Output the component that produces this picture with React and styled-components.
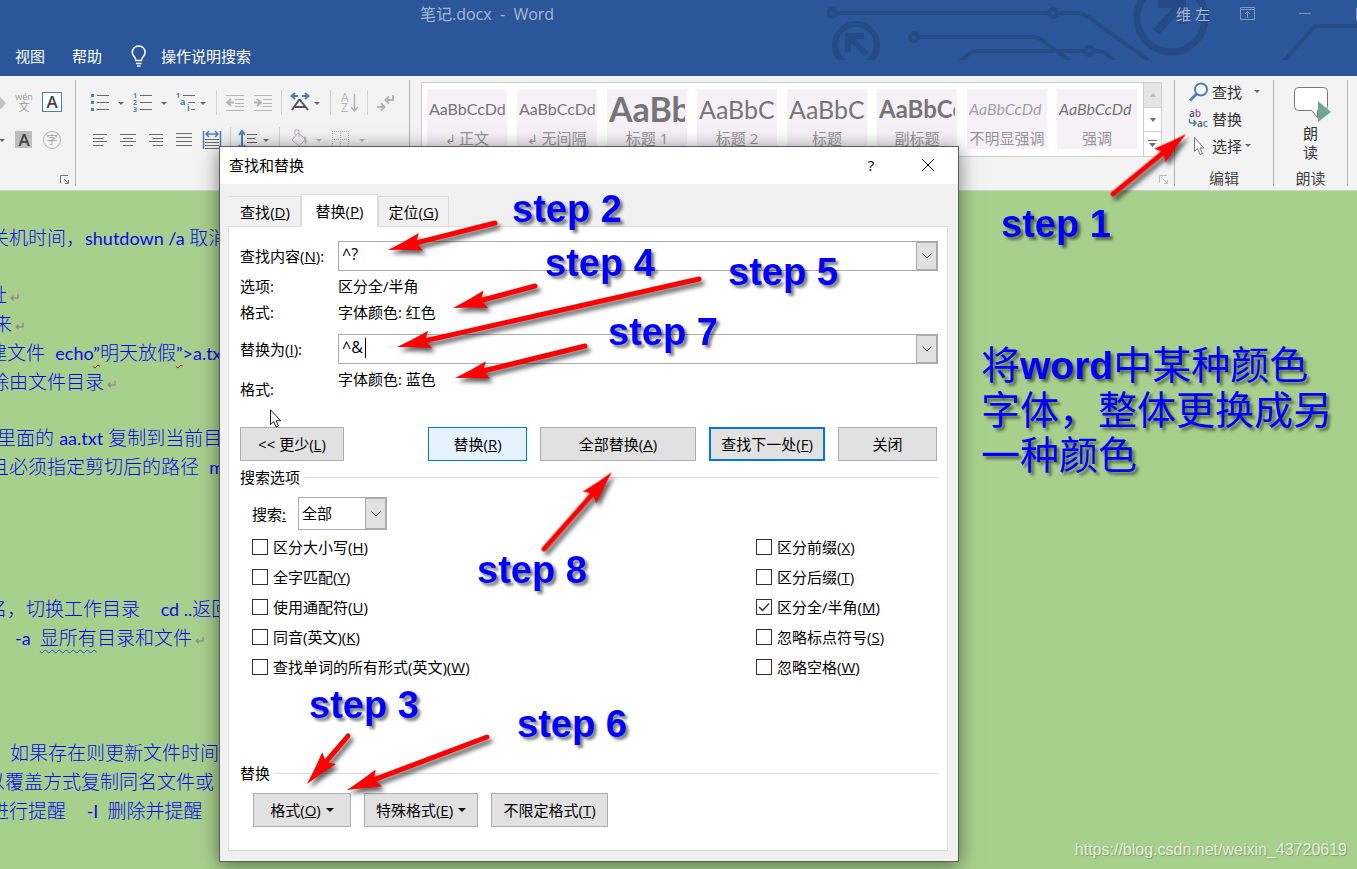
import React, { Component } from 'react';
import styled, { createGlobalStyle, css } from 'styled-components';

const uiFont = '"Open Sans", "Noto Sans CJK SC", sans-serif';
const docFont = 'Lato, "Noto Sans CJK SC", sans-serif';
const blue = '#4a80ba';
const gray = '#6a6a6a';
const faded = '#b5b3b5';

const GlobalStyle = createGlobalStyle`
    * {
        box-sizing: border-box;
    }

    body {
        margin: 0;
        font-family: ${uiFont};
        font-size: 15px;
        line-height: 20px;
        color: #000;
    }

    button, input, select {
        font: inherit;
        color: inherit;
        margin: 0;
        padding: 0;
        border: 0;
        background: none;
        border-radius: 0;
    }

    svg {
        display: block;
        flex: none;
    }
`;

const Page = styled.div`
    position: relative;
    display: flex;
    flex-direction: column;
    min-height: 100vh;
    overflow: hidden;
    background: #a8d08d;
`;

/* ---------- title bar ---------- */

const Header = styled.header`
    position: relative;
    background: #2b579a;
    color: #fff;
`;

const Circuit = styled.svg`
    position: absolute;
    top: 0;
    right: 0;
`;

const TitleBar = styled.div`
    position: relative;
    display: flex;
    align-items: center;
    height: 27px;
    padding-left: 420px;
    color: #a6b8d6;
`;

const DocTitle = styled.span`
    flex: 1;
    font-size: 16px;
    white-space: pre;
`;

const UserName = styled.span`
    margin-right: 18px;
`;

const WindowButton = styled.button`
    display: flex;
    justify-content: center;
    width: ${props => props.$wide ? 76 : 39}px;
`;

const MenuBar = styled.nav`
    position: relative;
    display: flex;
    align-items: center;
    gap: 27px;
    height: 49px;
    padding: 8px 15px 0;
`;

const MenuButton = styled.button`
    display: flex;
    align-items: center;
    gap: 13px;
`;

/* ---------- ribbon ---------- */

const Ribbon = styled.section`
    display: flex;
    height: 115px;
    padding-top: 4px;
    background: #f3f3f3;
    border-bottom: 1px solid #d2d2d2;
`;

const Group = styled.div`
    position: relative;
    display: flex;
    flex-direction: column;
    width: ${props => props.$width}px;
    height: 106px;
    border-right: 1px solid #b4b4b4;

    ${props => props.$grow && css`
        flex: 1;
        width: auto;
    `}

    &:last-child {
        border-right: 0;
    }
`;

const ToolRow = styled.div`
    display: flex;
    align-items: center;
    height: 24px;
    margin-top: ${props => props.$first ? 10 : 13}px;
    padding-left: ${props => props.$pad || 0}px;
`;

const Tool = styled.button`
    flex: none;
    width: ${props => props.$width}px;
    height: 24px;
`;

const Separator = styled.span`
    width: 1px;
    height: 25px;
    background: #d0d0d0;
`;

const GroupLabel = styled.span`
    margin-top: auto;
    line-height: 16px;
    text-align: center;
    color: #444;
`;

const Launcher = styled.button`
    position: absolute;
    right: 5px;
    bottom: 1px;
`;

const Gallery = styled.div`
    display: flex;
    margin: 2px 12px 0 11px;
    height: 75px;
    background: #fff;
    border: 1px solid #cfcfcf;
`;

const Tiles = styled.div`
    flex: 1;
    display: flex;
    gap: 10px;
    padding: 6px 5px;
    overflow: hidden;
`;

const Tile = styled.button`
    flex: none;
    display: flex;
    flex-direction: column;
    width: 80px;
    height: 60px;
    padding: 0 2px;
    background: #f6f1f7;
    overflow: hidden;
    color: #979597;
`;

const Sample = styled.span`
    width: 76px;
    height: 40px;
    line-height: 40px;
    overflow: hidden;
    text-align: left;
    white-space: nowrap;
    font-family: ${docFont};
    font-size: ${props => props.$size}px;
    font-weight: ${props => props.$bold ? 700 : 400};
    font-style: ${props => props.$italic ? 'italic' : 'normal'};
    color: ${props => props.$pale ? '#a3a1a3' : '#777577'};
`;

const TileName = styled.span`
    width: 76px;
    line-height: 18px;
    white-space: nowrap;
    text-align: center;
`;

const GalleryScroll = styled.div`
    display: flex;
    flex-direction: column;
    width: 18px;
    border-left: 1px solid #cfcfcf;
`;

const ScrollButton = styled.button`
    display: flex;
    align-items: center;
    justify-content: center;
    flex: 1;
    background: ${props => props.$off ? '#e5e5e5' : '#fff'};

    & + & {
        border-top: 1px solid #cfcfcf;
    }
`;

const EditList = styled.div`
    display: flex;
    flex-direction: column;
    margin-top: -2px;
    padding-left: 13px;
`;

const EditButton = styled.button`
    display: flex;
    align-items: center;
    gap: 3px;
    height: 27px;
    color: #333;
`;

const SpeechButton = styled.button`
    display: flex;
    flex-direction: column;
    align-items: center;
    padding-top: 6px;
    line-height: 19px;
    color: #333;
`;

/* ---------- document ---------- */

const Document = styled.main`
    width: 100%;
    height: 678px;
    overflow: hidden;
    font-family: ${docFont};
    font-size: 19px;
    font-weight: 300;
    line-height: 29px;
    color: #0a0ae6;
`;

const Lines = styled.div`
    margin-top: ${props => props.$space}px;
`;

const Line = styled.p`
    height: 29px;
    margin: 0 0 0 ${props => props.$start}px;
    white-space: pre;
`;

const Latin = styled.span`
    font-size: 18px;
    font-weight: 400;
`;

const ReturnMark = styled.span`
    margin-left: 3px;
    font-family: "DejaVu Sans", sans-serif;
    font-size: 13px;
    line-height: 13px;
    color: #858585;
`;

const Wavy = styled.span`
    text-decoration: underline wavy ${props => props.$color} 1px;
    text-underline-offset: 4px;
`;

/* ---------- dialog ---------- */

const Dialog = styled.section`
    position: absolute;
    top: 146px;
    left: 219px;
    width: 740px;
    background: #f0f0f0;
    border: 1px solid #5c5c5c;
    box-shadow: 0 3px 18px rgba(0, 0, 0, 0.5);
`;

const DialogTitle = styled.div`
    display: flex;
    align-items: center;
    height: 37px;
    padding: 0 22px 2px 9px;
    background: #fff;
`;

const DialogName = styled.span`
    flex: 1;
`;

const TitleButton = styled.button`
    display: flex;
    justify-content: center;
    width: 16px;
    margin-left: 41px;
`;

const TabList = styled.div`
    display: flex;
    align-items: flex-end;
    height: 42px;
    padding-left: 10px;
`;

const Tab = styled.button`
    height: ${props => props.$active ? 33 : 30}px;
    width: ${props => props.$active ? 77 : 71}px;
    border: 1px solid #dcdcdc;
    border-bottom: 0;

    &:first-child {
        border-left: 0;
    }

    ${props => props.$active && css`
        position: relative;
        margin-bottom: -1px;
        background: #fff;
    `}
`;

const Panel = styled.div`
    margin: 0 10px 10px 8px;
    padding: 14px 9px 23px 11px;
    background: #fff;
    border: 1px solid #dcdcdc;
`;

const Field = styled.div`
    display: flex;
    align-items: center;
    height: 30px;
`;

const FieldLabel = styled.label`
    width: 98px;
`;

const Combo = styled.div`
    position: relative;
    flex: 1;
    display: flex;
    height: 30px;
    border: 1px solid #ababab;
`;

const ComboInput = styled.input`
    flex: 1;
    padding: 0 3px 4px;
    font-size: 16px;
    outline: 0;
`;

const Caret = styled.span`
    position: absolute;
    top: 3px;
    left: 26px;
    width: 1px;
    height: 20px;
    background: #000;
`;

const DropButton = styled.button`
    display: flex;
    align-items: center;
    justify-content: center;
    width: 21px;
    background: #e1e1e1;
    border: 1px solid #ababab;
`;

const Info = styled.dl`
    display: grid;
    grid-template-columns: 98px 1fr;
    line-height: 26px;
    margin: ${props => props.$tall ? '2px 0 35px' : '2px 0 9px'};
`;

const InfoName = styled.dt`
    padding-top: ${props => props.$low ? 10 : 0}px;
    line-height: 26px;
    height: 26px;
`;

const InfoValue = styled.dd`
    margin: 0;
`;

const Actions = styled.div`
    display: flex;
    gap: 13px;
    padding-right: 1px;
`;

const Button = styled.button`
    display: flex;
    align-items: center;
    justify-content: center;
    gap: 5px;
    width: ${props => props.$width}px;
    height: 34px;
    background: #e1e1e1;
    border: 1px solid #adadad;

    ${props => props.$less && css`
        margin-right: auto;
    `}

    ${props => props.$hot && css`
        background: #e5f1fb;
        border-color: #0078d7;
    `}

    ${props => props.$primary && css`
        border: 2px solid #0078d7;
    `}
`;

const SectionTitle = styled.h2`
    display: flex;
    align-items: center;
    gap: 5px;
    margin: ${props => props.$space}px 0 0;
    font-size: 15px;
    font-weight: 400;

    &::after {
        content: '';
        flex: 1;
        height: 1px;
        background: #dcdcdc;
    }
`;

const SearchRow = styled.div`
    display: flex;
    align-items: center;
    margin-top: 10px;
    padding-left: 12px;
`;

const SearchLabel = styled.label`
    width: 46px;
`;

const SelectBox = styled.div`
    position: relative;
    width: 89px;
    height: 33px;
    border: 1px solid #ababab;
`;

const Select = styled.select`
    appearance: none;
    width: 100%;
    height: 31px;
    padding: 0 3px 2px;
    background: #fff;
`;

const SelectArrow = styled.span`
    position: absolute;
    top: 0;
    right: 0;
    display: flex;
    align-items: center;
    justify-content: center;
    width: 21px;
    height: 31px;
    background: #e1e1e1;
    border: 1px solid #ababab;
    pointer-events: none;
`;

const Checks = styled.div`
    display: grid;
    grid-template-columns: 504px 1fr;
    grid-template-rows: repeat(5, 30px);
    grid-auto-flow: column;
    margin-top: 2px;
    padding-left: 12px;
`;

const CheckLabel = styled.label`
    display: flex;
    align-items: center;
    gap: 5px;
`;

const CheckBox = styled.input`
    appearance: none;
    width: 16px;
    height: 16px;
    border: 1px solid #333;
    background: #fff;

    &:checked {
        background: #fff url("data:image/svg+xml,%3Csvg xmlns='http://www.w3.org/2000/svg' viewBox='0 0 14 14'%3E%3Cpath d='M2 7l3.5 3.5L12 3.5' fill='none' stroke='%23333' stroke-width='1.5'/%3E%3C/svg%3E");
    }
`;

const FormatActions = styled(Actions)`
    margin-top: 10px;
    padding-left: 13px;
`;

/* ---------- notes drawn over the window ---------- */

const Notes = styled.div`
    position: absolute;
    inset: 0;
    pointer-events: none;
    color: #0000fe;
    font-family: "Liberation Sans", "Noto Sans CJK SC", sans-serif;
    text-shadow: 3px 3px 3px rgba(0, 0, 0, 0.5);

    b {
        font-weight: 700;
    }
`;

const Arrows = styled.svg`
    position: absolute;
    top: 0;
    left: 0;
    overflow: visible;
    filter: drop-shadow(3px 4px 2px rgba(0, 0, 0, 0.6));
`;

const Step = styled.span`
    position: absolute;
    top: ${props => props.$y}px;
    left: ${props => props.$x}px;
    font-size: 38px;
    line-height: 44px;
    font-weight: 700;
    white-space: nowrap;
`;

const Summary = styled.p`
    position: absolute;
    top: 343px;
    left: 981px;
    margin: 0;
    font-size: 39px;
    line-height: 45px;
    font-weight: 400;
    white-space: nowrap;
`;

const Pointer = styled.svg`
    position: absolute;
    top: 409px;
    left: 270px;
`;

const Watermark = styled.a`
    position: absolute;
    right: 10px;
    bottom: 9px;
    font-family: "Liberation Sans", sans-serif;
    font-size: 16px;
    text-decoration: none;
    color: #e3efdb;
    text-shadow: 1px 1px 1px rgba(90, 110, 80, 0.5);
`;

const arrows = [
    [1113, 194, 1186, 134],
    [495, 223, 388, 250],
    [535, 286, 453, 308],
    [699, 279, 397, 347],
    [585, 346, 455, 378],
    [544, 549, 612, 472],
    [348, 736, 307, 784],
    [487, 737, 347, 790],
];

const steps = [
    [1, 1001, 202],
    [2, 512, 187],
    [3, 309, 683],
    [4, 545, 241],
    [5, 728, 250],
    [6, 517, 702],
    [7, 608, 310],
    [8, 477, 548],
];

const styles = [
    {sample: 'AaBbCcDd', name: '正文', size: 16, mark: true},
    {sample: 'AaBbCcDd', name: '无间隔', size: 16, mark: true},
    {sample: 'AaBb', name: '标题 1', size: 34, bold: true},
    {sample: 'AaBbC', name: '标题 2', size: 25},
    {sample: 'AaBbC', name: '标题', size: 25},
    {sample: 'AaBbCc', name: '副标题', size: 24, bold: true},
    {sample: 'AaBbCcDd', name: '不明显强调', size: 16, italic: true, pale: true},
    {sample: 'AaBbCcDd', name: '强调', size: 16, italic: true},
];

const checks = [
    ['区分大小写', 'H'],
    ['全字匹配', 'Y'],
    ['使用通配符', 'U'],
    ['同音(英文)', 'K'],
    ['查找单词的所有形式(英文)', 'W'],
    ['区分前缀', 'X'],
    ['区分后缀', 'T'],
    ['区分全/半角', 'M', true],
    ['忽略标点符号', 'S'],
    ['忽略空格', 'W'],
];

// caption with its access key, "替换(P)"
const Key = ({text, k}) => <span>{text}(<u>{k}</u>)</span>;

const Down = ({x, y = 12, color = gray}) => <path d={`M${x} ${y - 1}h6l-3 3z`} fill={color}/>;

const Icon = ({width, children}) => <svg width={width} height="24" fill="none">{children}</svg>;

const Chevron = () => <svg width="12" height="8" fill="none" stroke="#444">
    <path d="M1.500 1.500L6 6l4.500-4.500"/>
</svg>;

const Triangle = () => <svg width="8" height="5"><path d="M0 0h8L4 4z" fill="#000"/></svg>;

const LauncherIcon = ({color}) => <svg width="10" height="10" fill="none" stroke={color}>
    <path d="M.5 8V.5H8M4 4l4 4M8.500 5v3.500H5"/>
</svg>;

const AlignTool = ({label, d}) => <Tool $width={28} aria-label={label}>
    <Icon width={28}><path d={d} stroke={gray}/></Icon>
</Tool>;

const Arrow = ({from, to}) => {
    const dx = to[0] - from[0];
    const dy = to[1] - from[1];
    const length = Math.hypot(dx, dy);
    const angle = Math.atan2(dy, dx) * 180 / Math.PI;

    return <g transform={`translate(${from[0]} ${from[1]}) rotate(${angle})`}>
        <path d={`M0 0H${length - 27}`} stroke="#fe0000" strokeWidth="5" strokeLinecap="round"/>
        <path
            d={`M${length} 0Q${length - 18} -4 ${length - 34} -9L${length - 29} 0L${length - 34} 9Q${length - 18} 4 ${length} 0z`}
            fill="#fe0000"
        />
    </g>
};

const AppHeader = () => <Header>
    <Circuit width="530" height="60" viewBox="827 0 530 60" fill="none" stroke="#244b86" strokeWidth="4">
        <circle cx="832" cy="13" r="4"/>
        <path d="M836 13h212M1057 13h20q6 0 11 4l60 43"/>
        <circle cx="1053" cy="13" r="4"/>
        <circle cx="914" cy="37" r="4"/>
        <path d="M918 37h115q5 0 9 3l28 21M960 61l10-8q3-2 7-2h107M1093 51h5q4 0 8 3l9 7"/>
        <circle cx="1089" cy="51" r="4"/>
        <path d="M1284 61l27-31q3-4 8-4h40"/>
        <circle cx="856" cy="45" r="21" strokeWidth="6"/>
        <path d="M864 36h-16v16M848 36l18 18" strokeWidth="6"/>
        <circle cx="1171" cy="18" r="34" strokeWidth="7"/>
        <path d="M1158 4h24v20M1182 4l-26 28" strokeWidth="8"/>
    </Circuit>
    <TitleBar>
        <DocTitle>笔记.docx  -  Word</DocTitle>
        <UserName>维 左</UserName>
        <WindowButton aria-label="功能区显示选项">
            <svg width="15" height="13" fill="none" stroke="#7c97c4">
                <path d="M.5.5h14v12H.5zM.5 2.500h14M7.500 11V5M5 7l2.500-2.500L10 7"/>
            </svg>
        </WindowButton>
        <WindowButton $wide aria-label="最小化">
            <svg width="12" height="13" stroke="#7c97c4"><path d="M0 6.500h12"/></svg>
        </WindowButton>
        <svg width="14" height="13" fill="none" stroke="#7c97c4"><path d="M13.500.5v12"/></svg>
    </TitleBar>
    <MenuBar>
        <MenuButton>视图</MenuButton>
        <MenuButton>帮助</MenuButton>
        <MenuButton>
            <svg width="19" height="22" fill="none" stroke="#fff" strokeWidth="1.500">
                <path d="M7 15.500C7 12 3.300 11.500 3.300 7.300a6.400 6.400 0 0 1 12.800 0c0 4.200-3.700 4.700-3.700 8.200zM7 18.500h5.500M8 21h3.500"/>
            </svg>
            操作说明搜索
        </MenuButton>
    </MenuBar>
</Header>;

const FontGroup = () => <Group $width={76}>
    <ToolRow $first>
        <Tool $width={10} aria-label="清除格式">
            <Icon width={10}><path d="M0 7l6 6-5 6H0z" fill="#c3c0c5"/></Icon>
        </Tool>
        <Tool $width={26} aria-label="拼音指南">
            <Icon width={26}>
                <text x="14" y="10" fontSize="9" textAnchor="middle" fill="#9b999b">wén</text>
                <text x="14" y="21" fontSize="11" textAnchor="middle" fill="#9b999b">文</text>
            </Icon>
        </Tool>
        <Tool $width={32} aria-label="字符边框">
            <Icon width={32}>
                <rect x="6.500" y="2.500" width="19" height="19" fill="#fff" stroke={blue}/>
                <text x="16" y="18" fontSize="17" fontWeight="600" textAnchor="middle" fill="#444">A</text>
            </Icon>
        </Tool>
    </ToolRow>
    <ToolRow>
        <Tool $width={10} aria-label="字体颜色"><Icon width={10}><Down x={-1} y={13}/></Icon></Tool>
        <Tool $width={26} aria-label="字符底纹">
            <Icon width={26}>
                <rect x="5" y="4" width="17" height="17" fill="#bdbdbd"/>
                <text x="14" y="19" fontSize="17" fontWeight="600" textAnchor="middle" fill="#444">A</text>
            </Icon>
        </Tool>
        <Tool $width={32} aria-label="带圈字符">
            <Icon width={32}>
                <circle cx="16" cy="13" r="8.500" stroke={faded}/>
                <text x="16" y="17" fontSize="11" textAnchor="middle" fill="#a3a1a3">字</text>
            </Icon>
        </Tool>
    </ToolRow>
    <Launcher aria-label="字体设置"><LauncherIcon color="#777"/></Launcher>
</Group>;

const ParagraphGroup = () => <Group $width={334}>
    <ToolRow $first $pad={10}>
        <Tool $width={45} aria-label="项目符号">
            <Icon width={45}>
                <path d="M5 4h3v3H5zM5 11h3v3H5zM5 18h3v3H5z" fill={blue}/>
                <path d="M11 5.500h12M11 12.500h12M11 19.500h12" stroke={gray}/>
                <Down x={32} y={13}/>
            </Icon>
        </Tool>
        <Tool $width={43} aria-label="编号">
            <Icon width={43}>
                <text x="2" y="8" fontSize="7" fontWeight="700" fill={blue}>1</text>
                <text x="2" y="15" fontSize="7" fontWeight="700" fill={blue}>2</text>
                <text x="2" y="22" fontSize="7" fontWeight="700" fill={blue}>3</text>
                <path d="M9 5.500h12M9 12.500h12M9 19.500h12" stroke={gray}/>
                <Down x={30} y={13}/>
            </Icon>
        </Tool>
        <Tool $width={42} aria-label="多级列表">
            <Icon width={42}>
                <text x="2" y="8" fontSize="7" fontWeight="700" fill={blue}>1</text>
                <text x="6" y="15" fontSize="9" fontWeight="700" fill={blue}>a</text>
                <text x="13" y="21" fontSize="9" fontWeight="700" fill={blue}>i</text>
                <path d="M9 5.500h12M14 12.500h7M17 19.500h4" stroke={gray}/>
                <Down x={26} y={13}/>
            </Icon>
        </Tool>
        <Separator/>
        <Tool $width={32} aria-label="减少缩进量">
            <Icon width={32}>
                <path d="M9 5.500h18M18 9.500h9M18 13.500h9M18 16.500h9M9 20.500h18" stroke={faded}/>
                <path d="M17 12.500h-6M14 9l-4 3.500 4 3.500" stroke={faded} strokeWidth="2"/>
            </Icon>
        </Tool>
        <Tool $width={32} aria-label="增加缩进量">
            <Icon width={32}>
                <path d="M5 5.500h18M14 9.500h9M14 13.500h9M14 16.500h9M5 20.500h18" stroke={faded}/>
                <path d="M5 12.500h6M8 9l4 3.500L8 16" stroke={faded} strokeWidth="2"/>
            </Icon>
        </Tool>
        <Separator/>
        <Tool $width={48} aria-label="中文版式">
            <Icon width={48}>
                <path d="M16 6h-6M13 3l-3.500 3 3.500 3M20 6h6M23 3l3.500 3-3.500 3" stroke={blue} strokeWidth="2"/>
                <path d="M10 20l7-10h1l8 10M13 17h10" stroke="#555" strokeWidth="2"/>
                <Down x={32} y={13}/>
            </Icon>
        </Tool>
        <Separator/>
        <Tool $width={36} aria-label="排序">
            <Icon width={36}>
                <text x="10" y="12" fontSize="12" fill={faded}>A</text>
                <text x="10" y="22" fontSize="12" fill={faded}>Z</text>
                <path d="M23.500 4v16M20 17l3.500 4 3.500-4" stroke={faded} strokeWidth="1.500"/>
            </Icon>
        </Tool>
        <Separator/>
        <Tool $width={36} aria-label="显示编辑标记">
            <Icon width={36}>
                <path d="M25 5v5h-7M21 6.500L17.500 10l3.500 3.500M9 17h7M13 13.500l3.500 3.500-3.500 3.500" stroke={faded} strokeWidth="2"/>
            </Icon>
        </Tool>
    </ToolRow>
    <ToolRow $pad={10}>
        <AlignTool label="左对齐" d="M7 7.500h14M7 11.500h10M7 14.500h14M7 18.500h10"/>
        <AlignTool label="居中" d="M6 7.500h16M9 11.500h10M6 14.500h16M9 18.500h10"/>
        <AlignTool label="右对齐" d="M7 7.500h14M11 11.500h10M7 14.500h14M11 18.500h10"/>
        <AlignTool label="两端对齐" d="M6 6.500h16M6 10.500h16M6 14.500h16M6 18.500h16"/>
        <Tool $width={32} aria-label="分散对齐">
            <Icon width={32}>
                <path d="M5.500 4v18M22.500 4v18M9 7h10M11 4L8 7l3 3M17 4l3 3-3 3" stroke={blue} strokeWidth="1.500"/>
                <path d="M7 12.500h14M7 15.500h14M7 18.500h14M7 21.500h14" stroke={gray}/>
            </Icon>
        </Tool>
        <Separator/>
        <Tool $width={48} aria-label="行距">
            <Icon width={48}>
                <path d="M11 5v16M8 8l3-4 3 4M8 18l3 4 3-4" stroke={blue} strokeWidth="2"/>
                <path d="M16 7.500h10M16 11.500h8M16 15.500h10M16 19.500h8" stroke={gray}/>
                <Down x={32} y={13}/>
            </Icon>
        </Tool>
        <Separator/>
        <Tool $width={46} aria-label="底纹">
            <Icon width={46}>
                <path d="M12 13l6-7 8 6-7 7zM15 8V3h4v7" stroke={faded} fill="#f8f2f8"/>
                <path d="M24 9q4 2 2 9l-2-5z" fill={faded}/>
                <Down x={36} y={13} color={faded}/>
            </Icon>
        </Tool>
        <Tool $width={46} aria-label="边框">
            <Icon width={46}>
                <path d="M6.500 4v18M14.500 4v18M22.500 4v18M6 4.500h17M6 12.500h17" stroke={faded} strokeDasharray="1 1"/>
                <Down x={33} y={13} color={faded}/>
            </Icon>
        </Tool>
    </ToolRow>
    <GroupLabel>段落</GroupLabel>
</Group>;

const StylesGroup = () => <Group $grow>
    <Gallery>
        <Tiles>
            {styles.map(s => <Tile key={s.name}>
                <Sample $size={s.size} $bold={s.bold} $italic={s.italic} $pale={s.pale}>{s.sample}</Sample>
                <TileName>{s.mark && <small>↲ </small>}{s.name}</TileName>
            </Tile>)}
        </Tiles>
        <GalleryScroll>
            <ScrollButton $off aria-label="上一行">
                <svg width="6" height="4"><path d="M0 4h6L3 0z" fill="#bbb"/></svg>
            </ScrollButton>
            <ScrollButton aria-label="下一行">
                <svg width="6" height="4"><path d="M0 0h6L3 4z" fill={gray}/></svg>
            </ScrollButton>
            <ScrollButton aria-label="其他">
                <svg width="9" height="8"><path d="M0 0h9v1H0zM1 3h7L4.500 7z" fill={gray}/></svg>
            </ScrollButton>
        </GalleryScroll>
    </Gallery>
    <Launcher aria-label="样式设置"><LauncherIcon color="#bbb"/></Launcher>
</Group>;

const EditGroup = () => <Group $width={99}>
    <EditList>
        <EditButton>
            <svg width="21" height="20" fill="none" stroke={blue}>
                <circle cx="13" cy="7.500" r="6" strokeWidth="2" fill="#fff"/>
                <path d="M8.500 12L2 18.500" strokeWidth="3"/>
            </svg>
            查找
            <svg width="20" height="6"><Down x={9} y={2}/></svg>
        </EditButton>
        <EditButton>
            <svg width="21" height="20" fill="none" fontWeight="600">
                <text x="1" y="8" fontSize="10" fill="#555">a<tspan fill="#8e5bb0">b</tspan></text>
                <text x="9" y="18" fontSize="10" fill="#555">a<tspan fill={blue}>c</tspan></text>
                <path d="M1.500 10v3q0 1 1 1H8M5.500 11L8 14l-2.500 3" stroke={blue} strokeWidth="1.500"/>
            </svg>
            替换
        </EditButton>
        <EditButton>
            <svg width="21" height="20" fill="#fff" stroke="#777">
                <path d="M6.500 1.500v14l3-3 2.500 6 2.500-1-2.500-5.500h4z"/>
            </svg>
            选择
            <svg width="8" height="6"><Down x={0} y={2}/></svg>
        </EditButton>
    </EditList>
    <GroupLabel>编辑</GroupLabel>
</Group>;

const SpeechGroup = () => <Group $width={74}>
    <SpeechButton>
        <svg width="40" height="38" fill="none">
            <path d="M7.500 1.500h25q4 0 4 4v15q0 4-4 4h-6v7l-6-7h-13q-4 0-4-4v-15q0-4 4-4z" fill="#fff" stroke="#777"/>
            <path d="M27 15l13 11-13 10z" fill="#6fa793"/>
        </svg>
        <span>朗</span>
        <span>读</span>
    </SpeechButton>
    <GroupLabel>朗读</GroupLabel>
</Group>;

const DocumentText = () => <Document>
    <Lines $space={32}>
        <Line $start={-10}>关机时间，<Latin>shutdown /a </Latin>取消关机</Line>
    </Lines>
    <Lines $space={28}>
        <Line $start={-12}>址<ReturnMark>↵</ReturnMark></Line>
        <Line $start={-7}>来<ReturnMark>↵</ReturnMark></Line>
        <Line $start={-12}>建文件  <Latin>echo<Wavy $color="#c00000">”</Wavy></Latin>明天放假<Latin><Wavy $color="#c00000">”</Wavy>&gt;a.txt</Latin></Line>
        <Line $start={-10}>除由文件目录<ReturnMark>↵</ReturnMark></Line>
    </Lines>
    <Lines $space={27}>
        <Line $start={-3}>里面的 <Latin>aa.txt</Latin> 复制到当前目录</Line>
        <Line $start={-10}>且必须指定剪切后的路径  <Latin>mv</Latin></Line>
    </Lines>
    <Lines $space={113}>
        <Line $start={-12}>名，切换工作目录    <Latin>cd ..</Latin>返回</Line>
        <Line $start={15}><Latin>-a  </Latin><Wavy $color="#2a52b8">显所有</Wavy>目录和文件<ReturnMark>↵</ReturnMark></Line>
    </Lines>
    <Lines $space={86}>
        <Line $start={10}>如果存在则更新文件时间</Line>
        <Line $start={-14}>以覆盖方式复制同名文件或</Line>
        <Line $start={-10}>进行提醒    <Latin>-I  </Latin>删除并提醒</Line>
    </Lines>
</Document>;

class ReplaceDialog extends Component {

    state = {find: '^?', replace: '^&'};

    onFindChange = (e) => {
        this.setState({find: e.target.value});
    };

    onReplaceChange = (e) => {
        this.setState({replace: e.target.value});
    };

    render() {
        const {find, replace} = this.state;

        return <Dialog role="dialog" aria-label="查找和替换">
            <DialogTitle>
                <DialogName>查找和替换</DialogName>
                <TitleButton>?</TitleButton>
                <TitleButton aria-label="关闭">
                    <svg width="14" height="14" stroke="#000"><path d="M1 1l12 12M13 1L1 13"/></svg>
                </TitleButton>
            </DialogTitle>
            <TabList>
                <Tab><Key text="查找" k="D"/></Tab>
                <Tab $active><Key text="替换" k="P"/></Tab>
                <Tab><Key text="定位" k="G"/></Tab>
            </TabList>
            <Panel>
                <Field>
                    <FieldLabel htmlFor="find"><Key text="查找内容" k="N"/>:</FieldLabel>
                    <Combo>
                        <ComboInput id="find" value={find} onChange={this.onFindChange}/>
                        <DropButton aria-label="查找记录"><Chevron/></DropButton>
                    </Combo>
                </Field>
                <Info>
                    <InfoName>选项:</InfoName>
                    <InfoValue>区分全/半角</InfoValue>
                    <InfoName>格式:</InfoName>
                    <InfoValue>字体颜色: 红色</InfoValue>
                </Info>
                <Field>
                    <FieldLabel htmlFor="replace"><Key text="替换为" k="I"/>:</FieldLabel>
                    <Combo>
                        <ComboInput id="replace" value={replace} onChange={this.onReplaceChange}/>
                        <Caret/>
                        <DropButton aria-label="替换记录"><Chevron/></DropButton>
                    </Combo>
                </Field>
                <Info $tall>
                    <InfoName $low>格式:</InfoName>
                    <InfoValue>字体颜色: 蓝色</InfoValue>
                </Info>
                <Actions>
                    <Button $width={104} $less><Key text="<< 更少" k="L"/></Button>
                    <Button $width={99} $hot><Key text="替换" k="R"/></Button>
                    <Button $width={156}><Key text="全部替换" k="A"/></Button>
                    <Button $width={116} $primary><Key text="查找下一处" k="F"/></Button>
                    <Button $width={99}>关闭</Button>
                </Actions>
                <SectionTitle $space={6}>搜索选项</SectionTitle>
                <SearchRow>
                    <SearchLabel htmlFor="scope">搜索<u>:</u></SearchLabel>
                    <SelectBox>
                        <Select id="scope" defaultValue="全部">
                            <option>全部</option>
                            <option>向上</option>
                            <option>向下</option>
                        </Select>
                        <SelectArrow><Chevron/></SelectArrow>
                    </SelectBox>
                </SearchRow>
                <Checks>
                    {checks.map(([text, k, checked]) => <CheckLabel key={text}>
                        <CheckBox type="checkbox" defaultChecked={checked}/>
                        <Key text={text} k={k}/>
                    </CheckLabel>)}
                </Checks>
                <SectionTitle $space={81}>替换</SectionTitle>
                <FormatActions>
                    <Button $width={98}><Key text="格式" k="O"/><Triangle/></Button>
                    <Button $width={114}><Key text="特殊格式" k="E"/><Triangle/></Button>
                    <Button $width={117}><Key text="不限定格式" k="T"/></Button>
                </FormatActions>
            </Panel>
        </Dialog>
    }
}

const Annotations = () => <Notes>
    <Pointer width="14" height="20" fill="#fff" stroke="#222">
        <path d="M.5.8v14.700l3.300-3 2.200 5.500 2.500-1-2.300-5.300h4.500z"/>
    </Pointer>
    <Arrows width="1" height="1">
        {arrows.map(([x1, y1, x2, y2]) => <Arrow key={`${x1}-${y1}`} from={[x1, y1]} to={[x2, y2]}/>)}
    </Arrows>
    {steps.map(([n, x, y]) => <Step key={n} $x={x} $y={y}>step {n}</Step>)}
    <Summary>将<b>word</b>中某种颜色<br/>字体，整体更换成另<br/>一种颜色</Summary>
</Notes>;

export default function App() {
    return <Page>
        <GlobalStyle/>
        <AppHeader/>
        <Ribbon>
            <FontGroup/>
            <ParagraphGroup/>
            <StylesGroup/>
            <EditGroup/>
            <SpeechGroup/>
            <Group $width={9}/>
        </Ribbon>
        <DocumentText/>
        <ReplaceDialog/>
        <Annotations/>
        <Watermark href="https://blog.csdn.net/weixin_43720619">https://blog.csdn.net/weixin_43720619</Watermark>
    </Page>
}
